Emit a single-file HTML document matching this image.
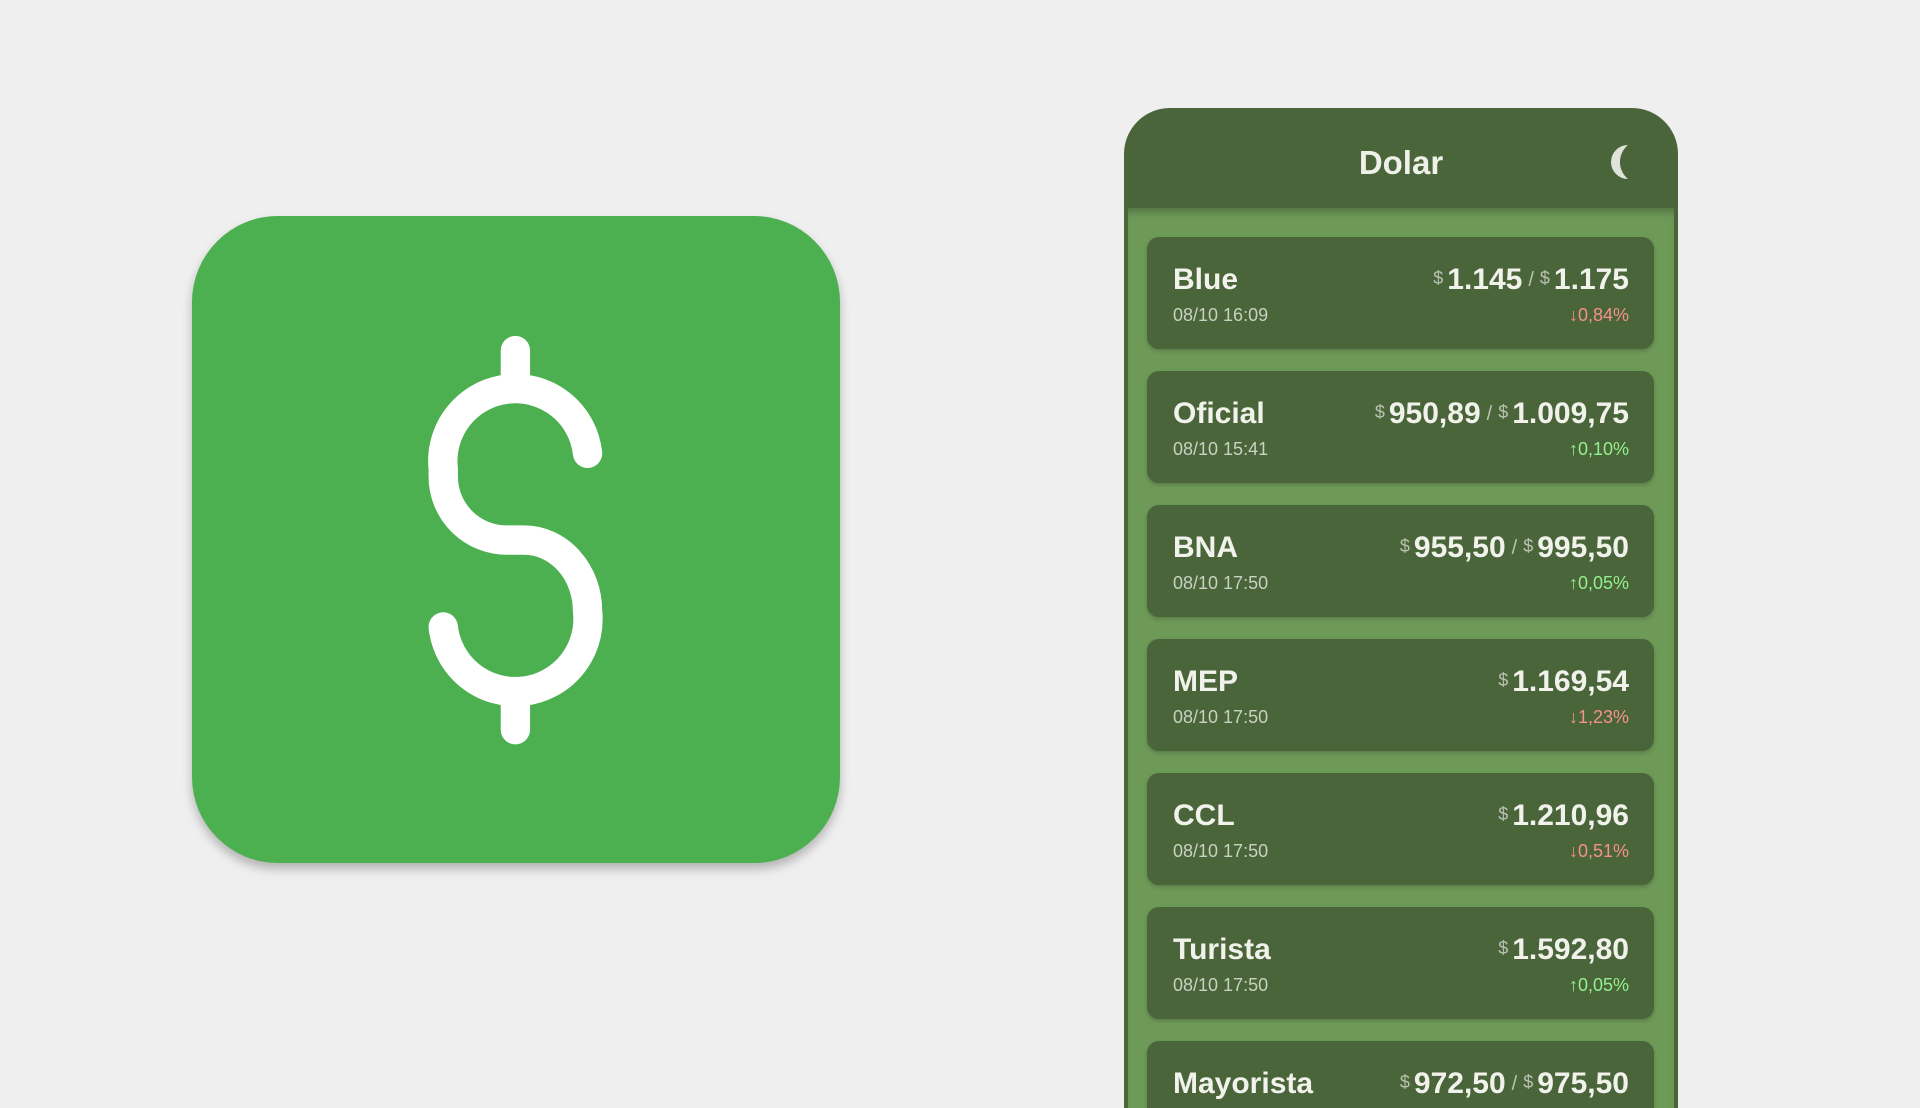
<!DOCTYPE html>
<html><head><meta charset="utf-8"><style>
body{margin:0;width:1920px;height:1080px;background:#efefef;overflow:hidden;position:relative;font-family:"Liberation Sans",sans-serif}
.icon{position:absolute;left:192px;top:216px;width:648px;height:647px;background:#4caf50;border-radius:86px;box-shadow:0 6px 10px rgba(0,0,0,.25)}
.icon svg{position:absolute;left:0;top:0}
.phone{position:absolute;left:1124px;top:108px;width:554px;height:1000px;background:#4a6539;border-radius:46px 46px 0 0;overflow:hidden}
.hdr{height:100px;text-align:center;color:#f0f0ea;font-weight:bold;font-size:33px;line-height:110px;position:relative}
.moon{position:absolute;left:482px;top:36px}
.content{position:absolute;left:4px;right:4px;top:100px;bottom:0;background:#6e9a58;box-shadow:inset 0 8px 8px -4px rgba(0,0,0,.25)}
.card{position:absolute;left:19px;width:507px;height:112px;background:#4a6539;border-radius:12px;box-shadow:0 2px 4px rgba(0,0,0,.2);color:#f2f2ec}
.nm{position:absolute;left:26px;top:26px;font-size:30px;font-weight:bold}
.dt{position:absolute;left:26px;top:68px;font-size:18px;color:#c9d1c2}
.pr{position:absolute;right:25px;top:26px;font-size:30px;font-weight:bold;white-space:nowrap}
.pr s{text-decoration:none;font-size:18px;color:#b9c2b2;font-weight:normal;vertical-align:5px;margin-right:4px}
.pr i{font-style:normal;font-size:20px;color:#b9c2b2;font-weight:normal;margin:0 6px;vertical-align:3px}
.pc{position:absolute;right:25px;top:68px;font-size:18px}
.dn{color:#f4928a}.up{color:#93f090}
</style></head><body>
<div class="icon"><svg width="648" height="647" viewBox="157 176 529 529"><g fill="none" stroke="#fff" stroke-width="24" stroke-linecap="round"><path d="M421,286 L421,312 M421,570 L421,596"/><path d="M480,370 A59,59 0 0 0 362,383 L362,389 A52,52 0 0 0 414,441 L428,441 A52,58 0 0 1 480,499 A59,59 0 0 1 362,512"/></g></svg></div>
<div class="phone">
<div class="hdr">Dolar<svg class="moon" width="30" height="36" viewBox="0 0 30 36"><path d="M22 1 A17 17 0 0 0 22 35 A22 22 0 0 1 22 1Z" fill="#dfe3dc"/></svg></div>
<div class="content">
<div class="card" style="top:29px"><div class="nm">Blue</div><div class="dt">08/10 16:09</div><div class="pr"><s>$</s>1.145<i>/</i><s>$</s>1.175</div><div class="pc dn">↓0,84%</div></div>
<div class="card" style="top:163px"><div class="nm">Oficial</div><div class="dt">08/10 15:41</div><div class="pr"><s>$</s>950,89<i>/</i><s>$</s>1.009,75</div><div class="pc up">↑0,10%</div></div>
<div class="card" style="top:297px"><div class="nm">BNA</div><div class="dt">08/10 17:50</div><div class="pr"><s>$</s>955,50<i>/</i><s>$</s>995,50</div><div class="pc up">↑0,05%</div></div>
<div class="card" style="top:431px"><div class="nm">MEP</div><div class="dt">08/10 17:50</div><div class="pr"><s>$</s>1.169,54</div><div class="pc dn">↓1,23%</div></div>
<div class="card" style="top:565px"><div class="nm">CCL</div><div class="dt">08/10 17:50</div><div class="pr"><s>$</s>1.210,96</div><div class="pc dn">↓0,51%</div></div>
<div class="card" style="top:699px"><div class="nm">Turista</div><div class="dt">08/10 17:50</div><div class="pr"><s>$</s>1.592,80</div><div class="pc up">↑0,05%</div></div>
<div class="card" style="top:833px"><div class="nm">Mayorista</div><div class="dt">08/10 17:50</div><div class="pr"><s>$</s>972,50<i>/</i><s>$</s>975,50</div></div>
</div></div>
</body></html>
